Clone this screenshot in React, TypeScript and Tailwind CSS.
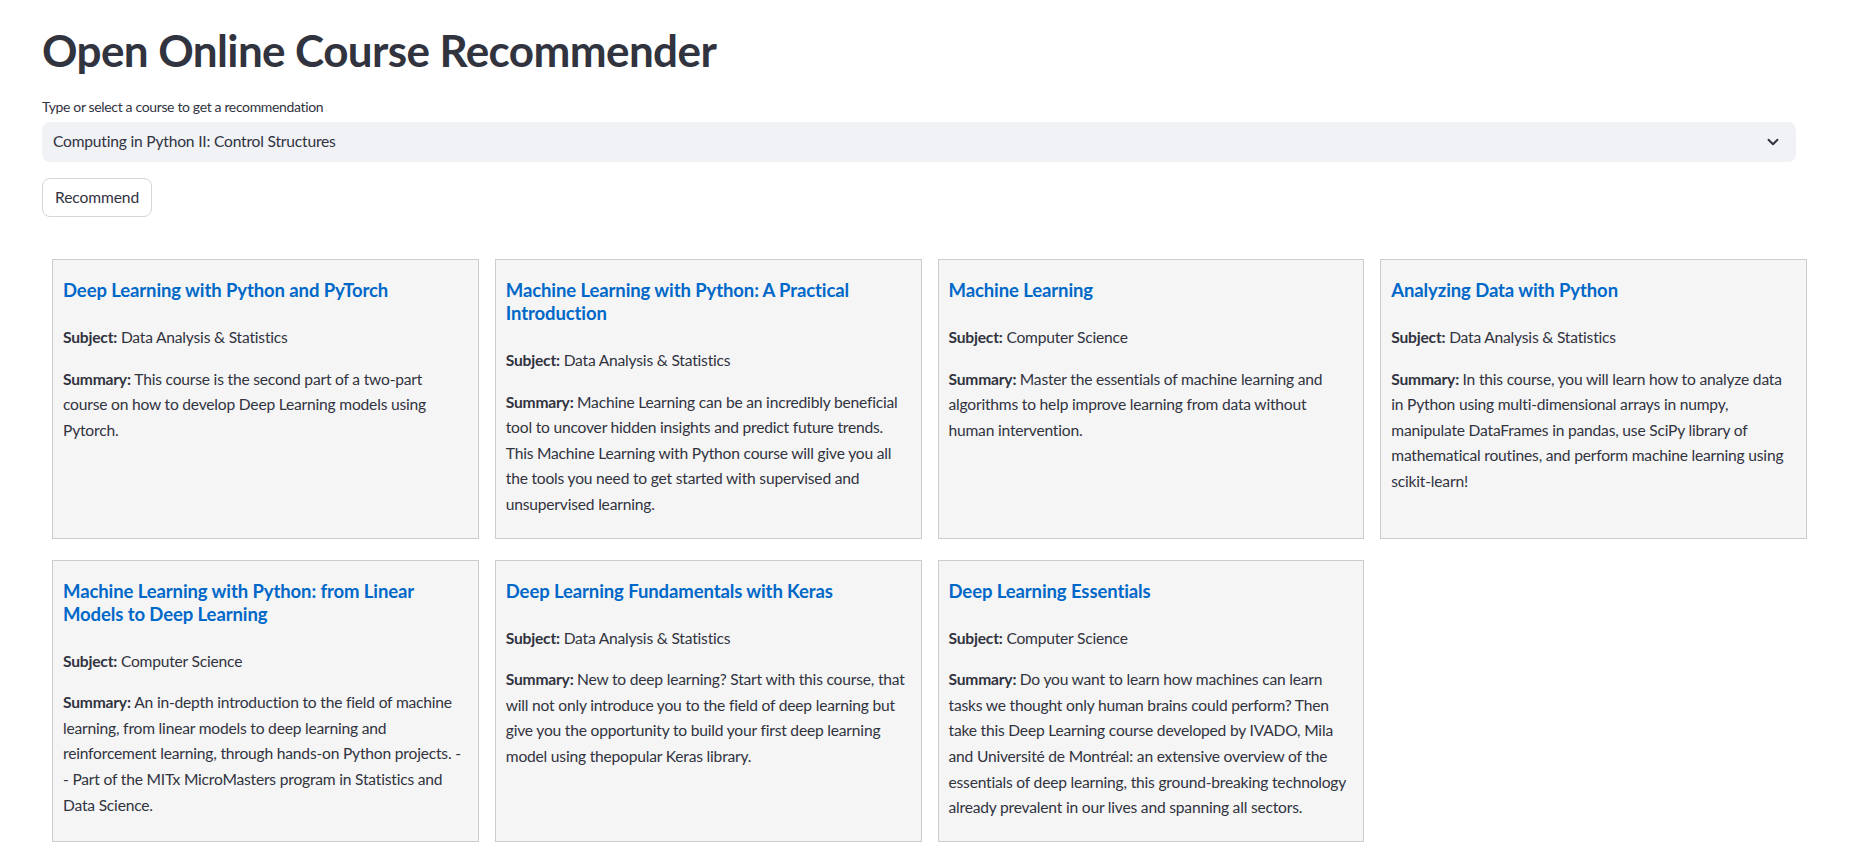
import { ChevronDown } from 'lucide-react'

interface Course {
  title: string[]
  subject: string
  summary: string[]
}

const courses: Course[] = [
  {
    title: ['Deep Learning with Python and PyTorch'],
    subject: 'Data Analysis & Statistics',
    summary: [
      'This course is the second part of a two-part',
      'course on how to develop Deep Learning models using',
      'Pytorch.',
    ],
  },
  {
    title: ['Machine Learning with Python: A Practical', 'Introduction'],
    subject: 'Data Analysis & Statistics',
    summary: [
      'Machine Learning can be an incredibly beneficial',
      'tool to uncover hidden insights and predict future trends.',
      'This Machine Learning with Python course will give you all',
      'the tools you need to get started with supervised and',
      'unsupervised learning.',
    ],
  },
  {
    title: ['Machine Learning'],
    subject: 'Computer Science',
    summary: [
      'Master the essentials of machine learning and',
      'algorithms to help improve learning from data without',
      'human intervention.',
    ],
  },
  {
    title: ['Analyzing Data with Python'],
    subject: 'Data Analysis & Statistics',
    summary: [
      'In this course, you will learn how to analyze data',
      'in Python using multi-dimensional arrays in numpy,',
      'manipulate DataFrames in pandas, use SciPy library of',
      'mathematical routines, and perform machine learning using',
      'scikit-learn!',
    ],
  },
  {
    title: ['Machine Learning with Python: from Linear', 'Models to Deep Learning'],
    subject: 'Computer Science',
    summary: [
      'An in-depth introduction to the field of machine',
      'learning, from linear models to deep learning and',
      'reinforcement learning, through hands-on Python projects. -',
      '- Part of the MITx MicroMasters program in Statistics and',
      'Data Science.',
    ],
  },
  {
    title: ['Deep Learning Fundamentals with Keras'],
    subject: 'Data Analysis & Statistics',
    summary: [
      'New to deep learning? Start with this course, that',
      'will not only introduce you to the field of deep learning but',
      'give you the opportunity to build your first deep learning',
      'model using thepopular Keras library.',
    ],
  },
  {
    title: ['Deep Learning Essentials'],
    subject: 'Computer Science',
    summary: [
      'Do you want to learn how machines can learn',
      'tasks we thought only human brains could perform? Then',
      'take this Deep Learning course developed by IVADO, Mila',
      'and Université de Montréal: an extensive overview of the',
      'essentials of deep learning, this ground-breaking technology',
      'already prevalent in our lives and spanning all sectors.',
    ],
  },
]

const CourseCard = ({ course }: { course: Course }) => {
  return (
    <div className="border border-[#cccccc] bg-[#f5f5f5] px-[10px] pt-[19px] pb-[20px]">
      <h4 className="text-[18.5px] leading-[23px] font-bold tracking-[-0.1px] text-[#0068c9]">
        {course.title.map((line, i) => (
          <span key={i} className="block whitespace-nowrap">
            {line}
          </span>
        ))}
      </h4>
      <p className="mt-[23px] text-[15.6px] leading-[25.6px] tracking-[-0.2px]">
        <strong className="font-bold">Subject:</strong> {course.subject}
      </p>
      <p className="mt-[16px] text-[15.6px] leading-[25.6px] tracking-[-0.2px]">
        {course.summary.map((line, i) => (
          <span key={i} className="block whitespace-nowrap">
            {i === 0 && <strong className="font-bold">Summary: </strong>}
            {line}
          </span>
        ))}
      </p>
    </div>
  )
}

const App = () => {
  return (
    <div
      className="min-h-screen bg-white pl-[42px] pr-[55px] pt-[24px] pb-[9px] text-[#31333f]"
      style={{ fontFamily: 'Lato, "Noto Sans", sans-serif' }}
    >
      <h1 className="text-[44px] leading-[52px] font-bold tracking-[-0.6px]">
        Open Online Course Recommender
      </h1>
      <label className="mt-[21px] block text-[14px] leading-[20px] tracking-[-0.35px]">
        Type or select a course to get a recommendation
      </label>
      <div className="mt-[5px] flex h-[40px] items-center justify-between rounded-lg bg-[#f0f2f6] pl-[11px] pr-[14px] text-[15.6px] tracking-[-0.2px]">
        <span>Computing in Python II: Control Structures</span>
        <ChevronDown size={18} strokeWidth={2.6} className="text-[#31333f]" />
      </div>
      <button className="mt-[16px] h-[39px] rounded-lg border border-[#d6d6d9] bg-white px-[12px] text-[15.6px] tracking-[-0.1px]">
        Recommend
      </button>
      <div className="mt-[42px] ml-[10px] mr-[-11px] grid grid-cols-4 gap-x-[16px] gap-y-[21px]">
        {courses.map((c) => (
          <CourseCard key={c.title.join(' ')} course={c} />
        ))}
      </div>
    </div>
  )
}

export default App
